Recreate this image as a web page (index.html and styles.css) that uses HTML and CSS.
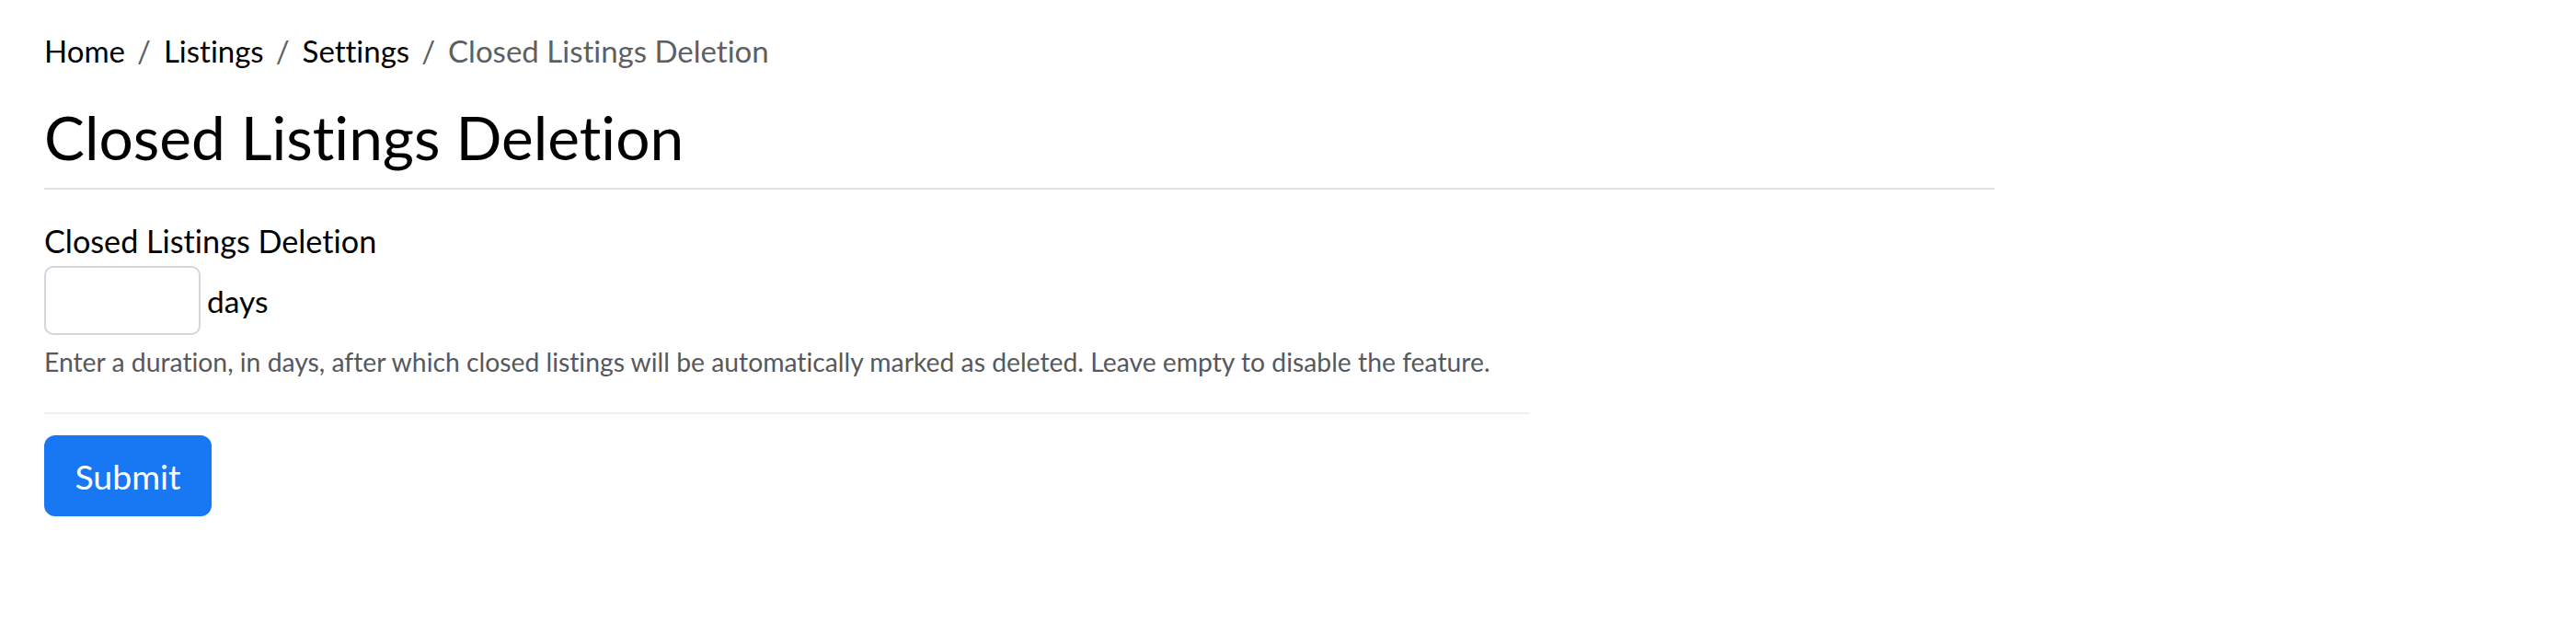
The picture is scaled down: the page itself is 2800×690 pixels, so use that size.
FILE: index.html
```html
<!DOCTYPE html>
<html lang="en">
<head>
<meta charset="utf-8">
<title>Closed Listings Deletion</title>
<link rel="stylesheet" href="styles.css">
</head>
<body>
<main class="page">
  <nav class="breadcrumb">
    <a class="crumb" href="#">Home</a><span class="sep">/</span>
    <a class="crumb" href="#">Listings</a><span class="sep">/</span>
    <a class="crumb" href="#">Settings</a><span class="sep">/</span>
    <span class="crumb current">Closed Listings Deletion</span>
  </nav>
  <h1 class="title">Closed Listings Deletion</h1>
  <form class="form">
    <label class="label" for="days">Closed Listings Deletion</label>
    <div class="input-row">
      <input class="input" id="days" type="text">
      <span class="unit">days</span>
    </div>
    <p class="help">Enter a duration, in days, after which closed listings will be automatically marked as deleted. Leave empty to disable the feature.</p>
    <div class="actions">
      <button class="btn" type="button">Submit</button>
    </div>
  </form>
</main>
</body>
</html>
```
FILE: styles.css
```css
html, body {
  margin: 0;
  padding: 0;
  background: #ffffff;
}
body {
  font-family: Lato, "Liberation Sans", sans-serif;
  font-variant-ligatures: none;
  color: #000000;
}
.page {
  width: 2120px;
  padding: 34px 48px;
}
.breadcrumb {
  display: flex;
  align-items: center;
  font-size: 33px;
  line-height: 42px;
  height: 42px;
}
.crumb {
  color: #000000;
  text-decoration: none;
}
.crumb.current {
  color: #5c5f64;
}
.sep {
  color: #5c5f64;
  padding: 0 14px 0 13px;
}
.title {
  font-size: 65.8px;
  font-weight: 400;
  line-height: 84px;
  margin: 31px 0 0 0;
  padding-bottom: 13px;
  border-bottom: 2px solid #e2e2e2;
}
.form {
  width: 1615px;
  padding-top: 35px;
}
.label {
  display: block;
  font-size: 34.2px;
  line-height: 42px;
}
.input-row {
  display: flex;
  align-items: center;
  gap: 7px;
  margin-top: 6px;
}
.input {
  width: 170px;
  height: 75px;
  box-sizing: border-box;
  border: 2px solid #d3d6dd;
  border-radius: 10px;
  font-size: 30px;
  padding: 0 14px;
  outline: none;
}
.unit {
  font-size: 33.5px;
  line-height: 42px;
}
.help {
  margin: 11px 0 0 0;
  font-size: 28.3px;
  line-height: 37px;
  color: #55585d;
}
.actions {
  margin-top: 36px;
  border-top: 2px solid #efefef;
  padding-top: 23px;
}
.btn {
  width: 182px;
  height: 88px;
  background: #1877f2;
  color: #ffffff;
  border: none;
  border-radius: 12px;
  font-family: inherit;
  font-size: 37.5px;
  cursor: pointer;
}
```
